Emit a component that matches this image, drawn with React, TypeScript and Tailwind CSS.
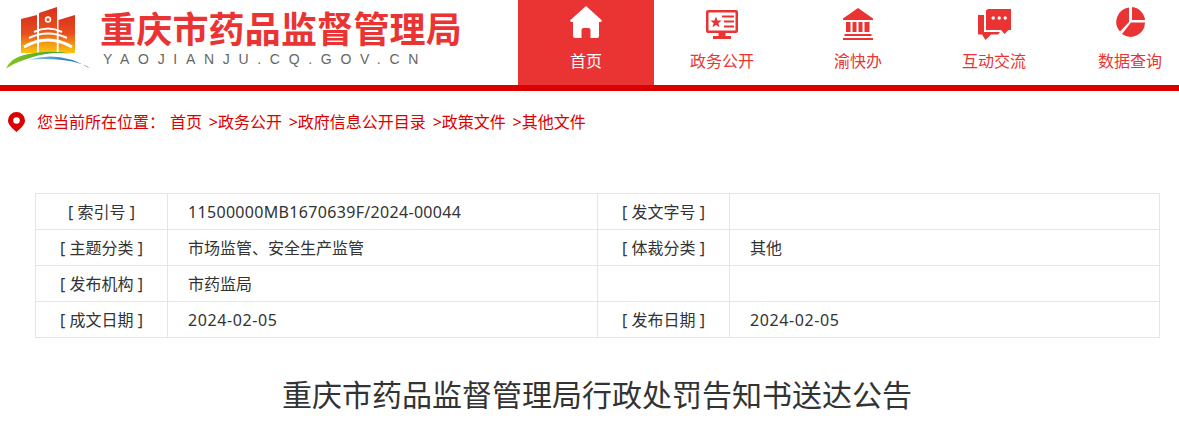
const FONT = "font-['Noto_Sans','Noto_Sans_CJK_SC',sans-serif]"

function Logo() {
  return (
    <svg width="100" height="80" viewBox="0 0 100 80" className="shrink-0" aria-hidden="true">
      <defs>
        <linearGradient id="bld" x1="0" y1="0" x2="0" y2="1">
          <stop offset="0" stopColor="#d9301f" />
          <stop offset="0.5" stopColor="#e8501c" />
          <stop offset="0.8" stopColor="#f59a14" />
          <stop offset="1" stopColor="#fcc70e" />
        </linearGradient>
        <linearGradient id="grass" x1="0" y1="0" x2="1" y2="0">
          <stop offset="0" stopColor="#8cc220" />
          <stop offset="1" stopColor="#2f9e3a" />
        </linearGradient>
        <linearGradient id="water" x1="0" y1="0" x2="1" y2="0">
          <stop offset="0" stopColor="#8fc9e8" />
          <stop offset="0.5" stopColor="#3f8fd0" />
          <stop offset="1" stopColor="#1f5fa8" />
        </linearGradient>
      </defs>
      <g fill="url(#bld)">
        <path d="M21 19 L37 15 V53 H21 Z" />
        <path d="M39 13 L57 7 V53 H39 Z" />
        <path d="M58.5 20 L75 15 V53 H58.5 Z" />
      </g>
      <circle cx="48" cy="19.5" r="3.2" fill="#fff" />
      <circle cx="48" cy="19.5" r="1.6" fill="#e8501c" />
      <g fill="none" stroke="#fff" strokeWidth="2">
        <path d="M34 32 Q48 25 62 32" />
        <path d="M29 38 Q48 29 67 38" />
        <path d="M24 47 Q48 33 72 47" strokeWidth="2.8" />
        <path d="M38 30 V53 M57.5 30 V53" strokeWidth="1.4" />
      </g>
      <path d="M6 68.5 Q11 58 24 55 Q50 49 72 54 Q50 51 30 58 Q16 62 6 68.5 Z" fill="url(#grass)" />
      <path d="M28 60 Q60 50 90 68.5 Q82 62 62 60 Q44 58 28 60 Z" fill="url(#water)" />
    </svg>
  )
}

const NAV = ['首页', '政务公开', '渝快办', '互动交流', '数据查询']

function NavIcon({ index }: { index: number }) {
  if (index === 0) {
    return (
      <svg width="32" height="32" viewBox="0 0 32 32" className="mt-[6px]" fill="#ffffff" aria-hidden="true">
        <path d="M16 0 L31.5 14 Q32.5 16 30 16 H29 V30 Q29 32 27 32 H20.5 V24 Q20.5 22 18.5 22 H13.5 Q11.5 22 11.5 24 V32 H5 Q3 32 3 30 V16 H2 Q-0.5 16 0.5 14 Z" />
      </svg>
    )
  }
  if (index === 1) {
    return (
      <svg width="32" height="30" viewBox="0 0 32 30" className="mt-[10px]" fill="#ea3434" aria-hidden="true">
        <path fillRule="evenodd" d="M2 0 H30 Q32 0 32 2 V21 Q32 23 30 23 H19.5 V26 H25 V29 H7 V26 H12.5 V23 H2 Q0 23 0 21 V2 Q0 0 2 0 Z M2.5 2.5 V20.5 H29.5 V2.5 Z" />
        <path d="M10 6.5 L11.5 10.4 L15.6 10.6 L12.4 13.2 L13.5 17.2 L10 15 L6.5 17.2 L7.6 13.2 L4.4 10.6 L8.5 10.4 Z" />
        <rect x="16" y="5.5" width="12" height="2" />
        <rect x="18" y="10.5" width="10" height="2" />
        <rect x="18" y="15.5" width="10" height="2" />
      </svg>
    )
  }
  if (index === 2) {
    return (
      <svg width="30" height="32" viewBox="0 0 30 32" className="mt-[8px]" fill="#ea3434" aria-hidden="true">
        <path d="M15 0 L30 10.5 V12 H0 V10.5 Z" />
        <rect x="3" y="14" width="4.5" height="10" />
        <rect x="9.5" y="14" width="4" height="10" />
        <rect x="15.5" y="14" width="4" height="10" />
        <rect x="21.5" y="14" width="5" height="10" />
        <rect x="1.5" y="26" width="27" height="2" />
        <rect x="0" y="30" width="30" height="2" />
      </svg>
    )
  }
  if (index === 3) {
    return (
      <svg width="33" height="31" viewBox="0 0 33 31" className="mt-[9px]" fill="#ea3434" aria-hidden="true">
        <path fillRule="evenodd" d="M8 1.5 L10 0 H33 V21 H30.5 L26.5 25 L23 21 H8 Z M13.5 9 a1.7 1.7 0 1 0 3.4 0 a1.7 1.7 0 1 0 -3.4 0 Z M19.5 9 a1.7 1.7 0 1 0 3.4 0 a1.7 1.7 0 1 0 -3.4 0 Z M25.5 9 a1.7 1.7 0 1 0 3.4 0 a1.7 1.7 0 1 0 -3.4 0 Z" />
        <path d="M0 6 H6 V23 H22 L20 25.5 H13 L7.5 31 L4 25.5 H0 Z" />
      </svg>
    )
  }
  return (
    <svg width="29" height="30" viewBox="0 0 29 30" className="mt-[7px]" fill="#ea3434" aria-hidden="true">
      <path d="M13 0.5 A14.5 14.5 0 0 0 4 24.5 L13 15 Z" />
      <path d="M16 0 A14.5 14.5 0 0 1 29 13 H16 Z" />
      <path d="M29 15.5 A14.5 14.5 0 0 1 6 27 L15 15.5 Z" />
    </svg>
  )
}

const ROWS = [
  ['[ 索引号 ]', '11500000MB1670639F/2024-00044', '[ 发文字号 ]', ''],
  ['[ 主题分类 ]', '市场监管、安全生产监管', '[ 体裁分类 ]', '其他'],
  ['[ 发布机构 ]', '市药监局', '', ''],
  ['[ 成文日期 ]', '2024-02-05', '[ 发布日期 ]', '2024-02-05'],
]

const CRUMBS = ['政务公开', '政府信息公开目录', '政策文件', '其他文件']

export default function App() {
  return (
    <div className={`h-[423px] w-[1179px] overflow-hidden bg-white ${FONT}`}>
      <header className="flex h-[91px] border-b-[6px] border-[#dc0000]">
        <div className="flex w-[518px] shrink-0 items-start">
          <Logo />
          <div className="pt-[10px]">
            <div className="text-[36px] font-bold leading-[40px] tracking-[0.2px] text-[#ea3434]">重庆市药品监督管理局</div>
            <div className="pl-[3px] font-['Liberation_Sans'] text-[14px] leading-[18px] tracking-[8.7px] text-[#666]">
              YAOJIANJU.CQ.GOV.CN
            </div>
          </div>
        </div>
        <nav className="flex">
          {NAV.map((label, i) => (
            <a
              key={label}
              className={`flex w-[136px] shrink-0 flex-col items-center ${i === 0 ? 'bg-[#ea3434] text-white' : 'text-[#ea3434]'}`}
            >
              <div className="flex h-[44px] items-start">
                <NavIcon index={i} />
              </div>
              <span className="mt-[5px] text-[16px] leading-[24px]">{label}</span>
            </a>
          ))}
        </nav>
      </header>

      <div className="flex h-[62px] items-center pl-[8px] text-[16px] text-[#dc0000]">
        <svg width="17" height="20" viewBox="0 0 17 20" className="mr-[12px] shrink-0" aria-hidden="true">
          <path
            fillRule="evenodd"
            d="M8.5 0 A8.5 8.5 0 0 1 17 8.5 C17 13 12 17 8.5 20 C5 17 0 13 0 8.5 A8.5 8.5 0 0 1 8.5 0 Z M8.5 5.2 A3.3 3.3 0 1 0 8.5 11.8 A3.3 3.3 0 1 0 8.5 5.2 Z"
            fill="#dc0000"
          />
        </svg>
        <span>您当前所在位置：</span>
        <span className="ml-[5px]">首页</span>
        {CRUMBS.map((c) => (
          <span key={c} className="ml-[6.75px]">&gt;{c}</span>
        ))}
      </div>

      <table className="mx-[35px] mt-[40px] w-[1124px] table-fixed border-collapse text-[16px] text-[#333]">
        <colgroup>
          <col className="w-[132px]" />
          <col className="w-[430px]" />
          <col className="w-[132px]" />
          <col className="w-[430px]" />
        </colgroup>
        <tbody>
          {ROWS.map((row) => (
            <tr key={row[0]} className="h-[36px]">
              {row.map((cell, i) => (
                <td
                  key={i}
                  className={`border border-[#e5e5e5] p-0 ${i % 2 === 0 ? 'text-center' : 'pl-[20px]'} ${
                    cell.startsWith('2024') ? 'tracking-[0.6px]' : cell.startsWith('115') ? 'tracking-[0.32px]' : ''
                  }`}
                >
                  {cell}
                </td>
              ))}
            </tr>
          ))}
        </tbody>
      </table>

      <h1 className="mt-[37px] pl-[15px] text-center text-[30px] font-normal leading-[40px] text-[#333]">
        重庆市药品监督管理局行政处罚告知书送达公告
      </h1>
    </div>
  )
}
